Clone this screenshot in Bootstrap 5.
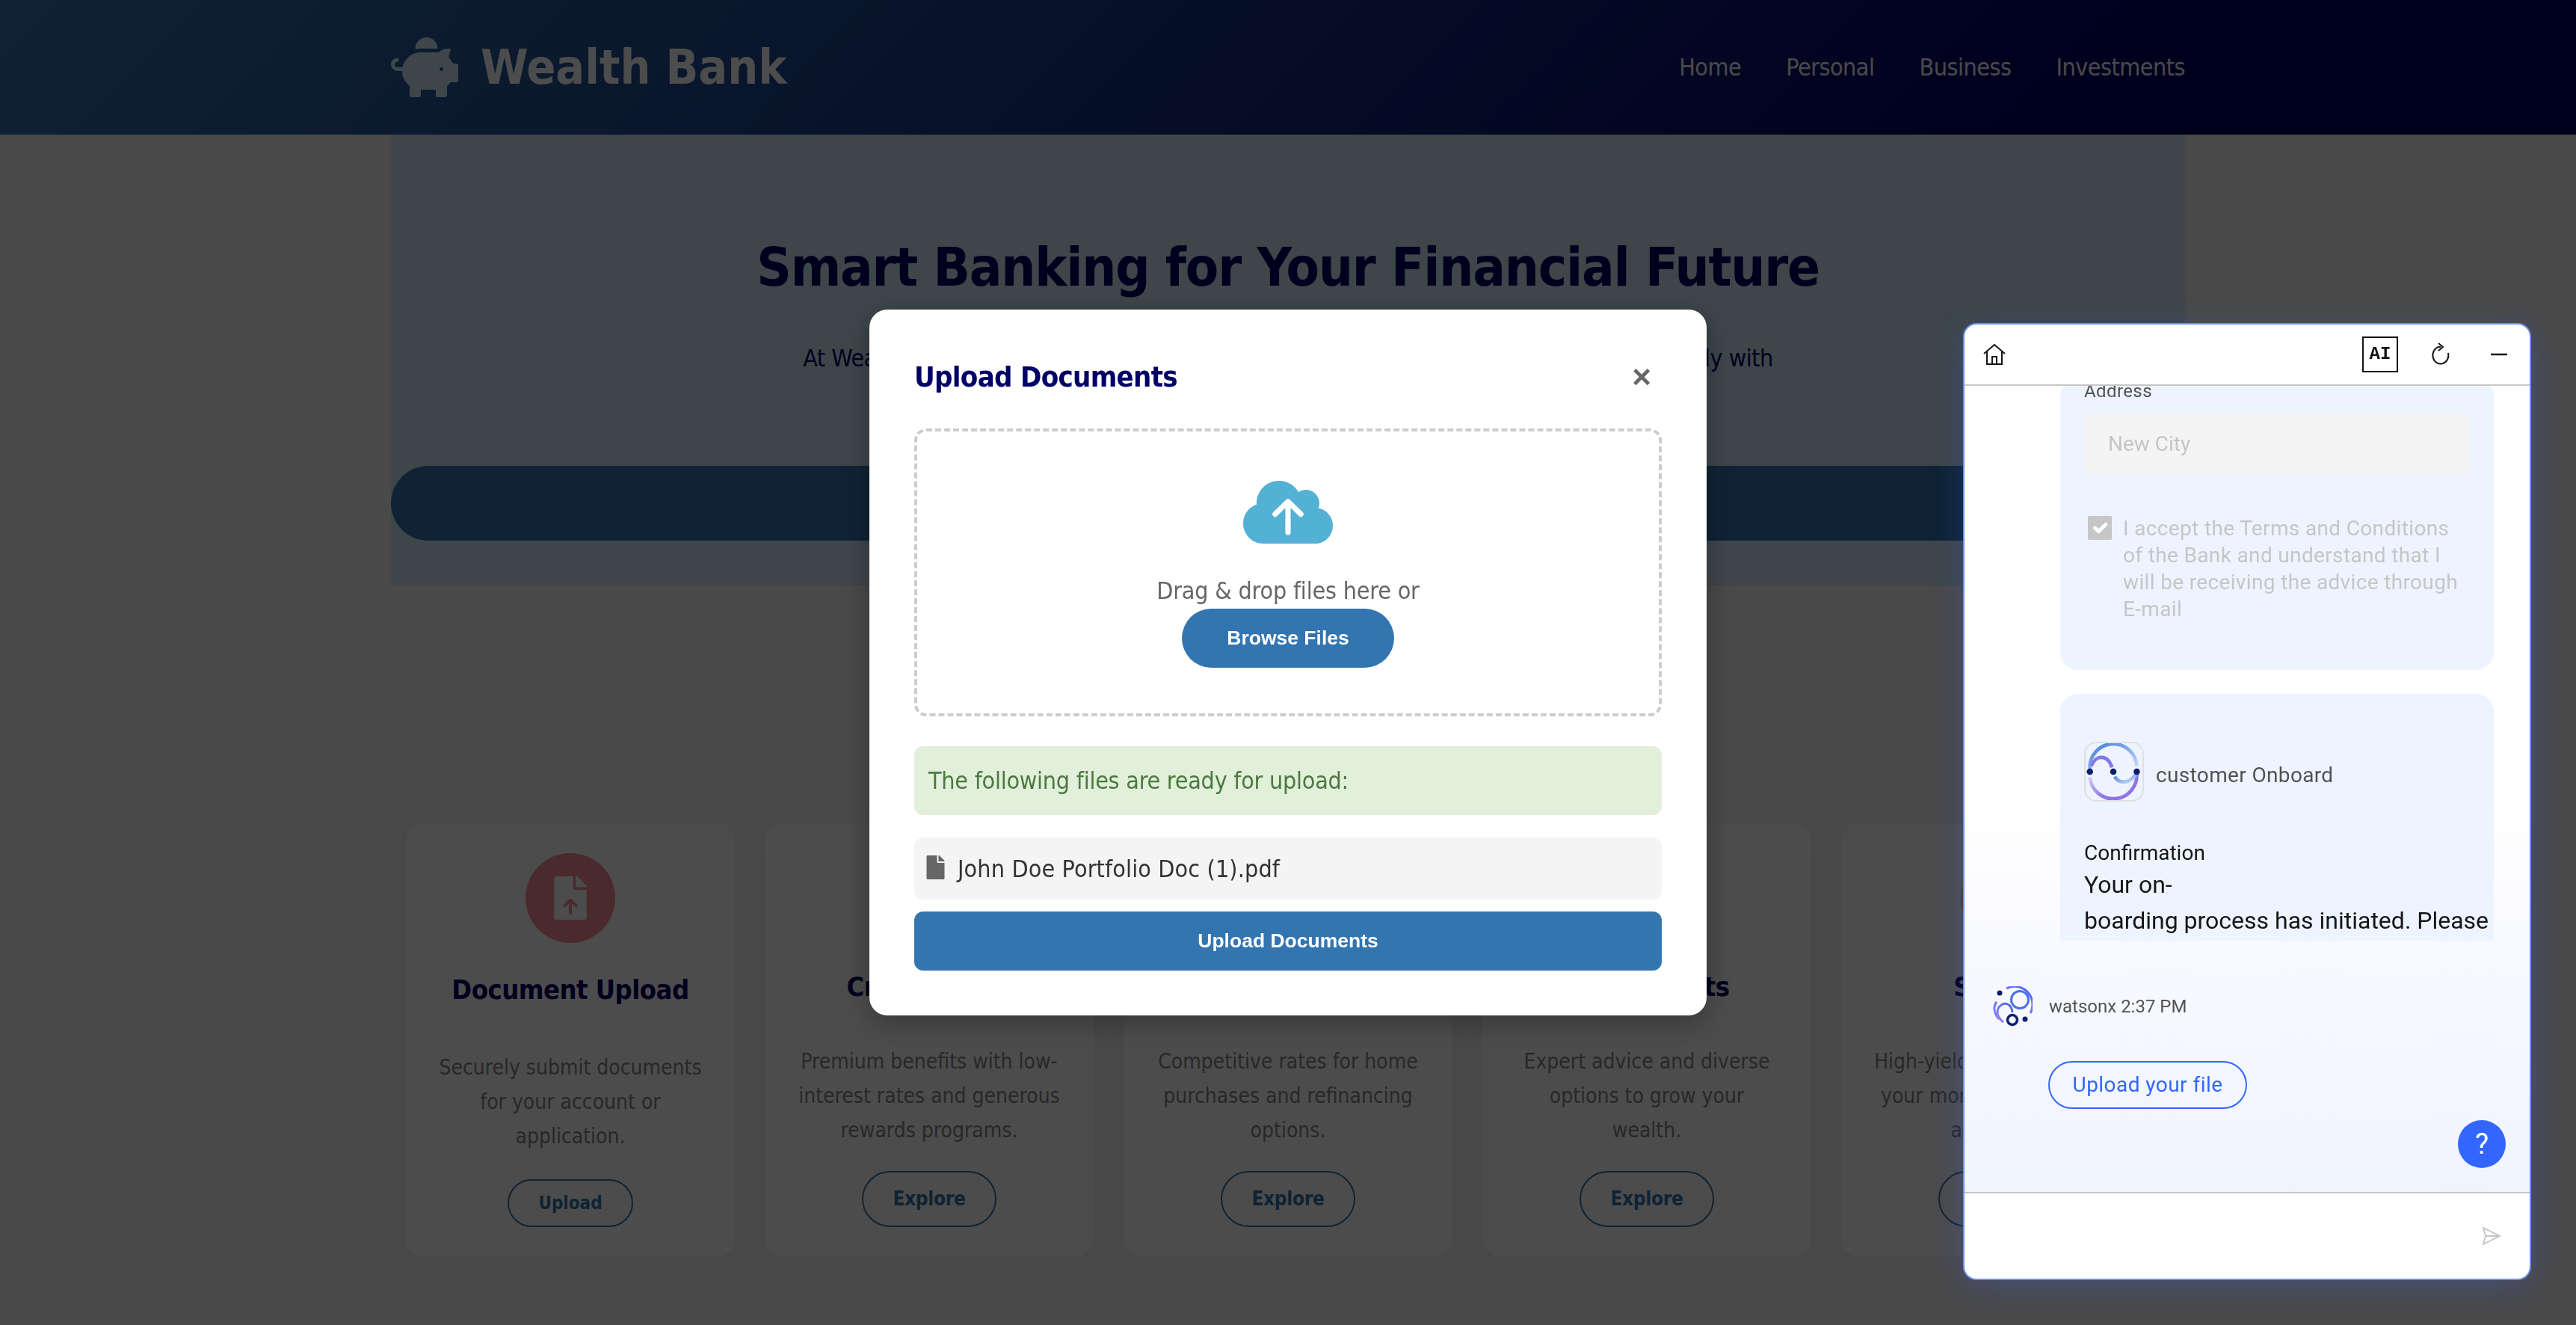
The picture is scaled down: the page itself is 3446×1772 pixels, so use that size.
<!DOCTYPE html>
<html lang="en">
<head>
  <meta charset="UTF-8">
  <meta name="viewport" content="width=device-width, initial-scale=1.0">
  <title>Wealth Bank</title>
  <link href="https://cdn.jsdelivr.net/npm/bootstrap@5.3.0/dist/css/bootstrap.min.css" rel="stylesheet">
  <style>
    body { background: #f5f5f5; font-family: "DejaVu Sans Condensed", "DejaVu Sans", sans-serif; font-size: 32px; color: #000066; }
    .top-bar { height: 180px; background: linear-gradient(135deg, #3375b0, #000066 80%); }
    .wrap-2400 { width: 2400px; margin: 0 auto; }
    .brand-row { gap: 30px; }
    .brand-name { font-size: 64px; font-weight: 700; color: #fff; line-height: 1; }
    .brand-icon { width: 90px; height: 80px; fill: #cfe9f3; }
    .top-nav { gap: 60px; }
    .top-link { color: #f5f5f5; font-size: 32px; letter-spacing: -.5px; text-decoration: none; }
    .hero-box { height: 603px; background: #cfe9f3; }
    .hero-title { font-size: 72px; letter-spacing: -1.15px; font-weight: 700; color: #000066; line-height: 80px; padding-top: 137px; margin: 0; }
    .hero-text { font-size: 32px; letter-spacing: -.5px; line-height: 48px; margin: 58px 0 0; height: 96px; color: #000066; }
    .hero-bar { height: 100px; background: #3375b0; margin-top: 72px; }
    .svc-row { padding: 318px 20px 0; gap: 40px; }
    .svc-card { flex: 1 1 0; min-width: 0; height: 580px; background: #fff; border-radius: 24px; padding: 40px 36px; box-shadow: 0 8px 32px rgba(0,0,0,.05); }
    .svc-icon { width: 120px; height: 120px; background: #f78c93; flex: none; }
    .svc-icon svg { width: 44px; height: 58px; }
    .svc-icon-warm { background: #ffc3aa; }
    .svc-title { font-size: 36px; letter-spacing: -.5px; line-height: 44px; font-weight: 700; margin: 37px 0 0; color: #000066; white-space: nowrap; }
    .svc-text { font-size: 28px; line-height: 46px; margin: 55px 0 0; color: #858585; }
    .svc-btn { width: 180px; height: 75px; margin-top: auto; border: 2px solid #3375b0; color: #3375b0; font-size: 26px; letter-spacing: -.3px; font-weight: 700; display: flex; align-items: center; justify-content: center; padding: 0; background: transparent; }
    .svc-first .svc-title { margin-top: 41px; }
    .svc-first .svc-text { margin-top: 59px; }
    .svc-first .svc-btn { width: 168px; height: 64px; font-size: 24px; letter-spacing: 0; }
    .modal-backdrop { --bs-backdrop-opacity: .7; }
    .modal { --bs-modal-width: 1120px; --bs-modal-border-radius: 24px; --bs-modal-border-width: 0; }
    .up-panel { padding: 60px; box-shadow: 0 10px 40px rgba(0,0,0,.3); }
    .up-title { font-size: 38px; letter-spacing: -.7px; line-height: 59px; padding-top: 1px; height: 59px; margin: 0; color: #000066; font-weight: 700; }
    .up-close { font-family: "Liberation Sans", sans-serif; font-weight: 700; font-size: 44px; line-height: 1; color: #666; border: 0; background: none; padding: 0; margin-right: 14px; }
    .drop-zone { height: 385px; margin-top: 40px; border: 4px dashed #ccc; border-radius: 16px; padding-top: 66px; }
    .drop-text { font-size: 32px; letter-spacing: -.2px; line-height: 48px; color: #666; margin: 39px 0 0; }
    .cloud-icon { width: 120px; height: 84px; display: block; }
    .browse-btn { width: 284px; height: 79px; background: #3375b0; color: #fff; border: 0; font-family: "Liberation Sans", sans-serif; font-weight: 700; font-size: 26.500px; padding: 0; }
    .ready-box { height: 92px; margin-top: 40px; background: #e2efda; color: #4a7a3f; border-radius: 12px; padding: 0 19px; font-size: 32px; letter-spacing: -.25px; }
    .file-row { height: 83px; margin-top: 30px; background: #f4f4f4; border-radius: 12px; padding: 0 16px; gap: 17px; color: #333; font-size: 32px; letter-spacing: .13px; }
    .file-row svg { width: 25px; height: 32px; fill: #666; margin-top: -4px; }
    .send-docs { height: 79px; margin-top: 16px; background: #3375b0; color: #fff; border: 0; border-radius: 12px; font-family: "Liberation Sans", sans-serif; font-weight: 700; font-size: 26.500px; }
    .chat-box { position: fixed; right: 60px; bottom: 60px; width: 760px; height: 1280px; z-index: 1060; background: #fff; border: 2px solid #6d91e0; border-radius: 18px; overflow: hidden; box-shadow: 0 8px 40px rgba(60,100,255,.25); font-family: Roboto, sans-serif; color: #161616; }
    .chat-head { height: 82px; flex: none; border-bottom: 2px solid #c6c6c6; padding: 0 29px 0 24px; }
    .ai-tag { width: 48px; height: 48px; border: 2px solid #161616; font-family: "Liberation Mono", monospace; font-weight: 700; font-size: 24px; line-height: 44px; text-align: center; }
    .head-renew { margin-left: 42px; }
    .head-min { margin-left: 53px; }
    .chat-body { position: relative; flex: 1 1 0; min-height: 0; background: linear-gradient(#fff 52%, #f9faff 68%, #f0f4ff); }
    .msg-scroll { height: 742px; overflow: hidden; padding-left: 128px; }
    .msg-bubble { width: 580px; background: #edf4ff; border-radius: 24px; padding: 0 32px; }
    .msg-one { margin-top: -10px; height: 390px; }
    .msg-two { margin-top: 32px; padding-top: 64px; padding-right: 0; height: 500px; }
    .addr-label { font-size: 24px; letter-spacing: .4px; line-height: 34px; color: #525252; margin: 0; padding: 0; }
    .addr-input { height: 79px; margin-top: 14px; border: 0; border-radius: 0; padding: 0 32px; font-size: 28px; font-family: inherit; }
    .addr-input:disabled { background: #f4f4f4; color: #c6c6c6; }
    .terms-row { margin-top: 56px; padding-left: 5px; gap: 15px; }
    .terms-row .form-check-input { width: 32px; height: 32px; margin: 1px 0 0; flex: none; border: 0; border-radius: 2px; background-color: #c6c6c6; opacity: 1; }
    .terms-label { font-size: 28px; letter-spacing: .35px; line-height: 36px; color: #c6c6c6; }
    .bot-logo { width: 80px; height: 80px; border: 2px solid #e0e0e0; border-radius: 16px; flex: none; }
    .bot-name { font-size: 28px; letter-spacing: .35px; color: #525252; margin-left: 16px; margin-top: 10px; }
    .conf-head { font-size: 28px; line-height: 36px; margin: 51px 0 0; }
    .conf-text { font-size: 32px; line-height: 48px; margin: 0; white-space: nowrap; }
    .meta-row { padding: 61px 0 0 37px; gap: 22px; }
    .meta-row svg { width: 54px; height: 54px; flex: none; }
    .meta-text { font-size: 24px; color: #525252; }
    .file-pill { width: 266px; height: 64px; margin: 46px 0 0 112px; border: 2px solid #3366ff; color: #3366ff; background: transparent; font-size: 28px; letter-spacing: .45px; padding: 0; }
    .help-dot { position: absolute; right: 32px; bottom: 32px; width: 64px; height: 64px; background: #3366ff; color: #fff; font-size: 38px; font-weight: 400; }
    .chat-foot { height: 116px; flex: none; border-top: 2px solid #c6c6c6; padding: 0 38px 0 0; }
    .chat-foot input { box-shadow: none; }
    .send-icon { flex: none; }
  </style>
</head>
<body class="overflow-hidden">

<header class="top-bar">
  <div class="wrap-2400 h-100 d-flex align-items-center justify-content-between">
    <div class="brand-row d-flex align-items-center">
      <svg class="brand-icon" viewBox="0 0 576 512"><path d="M560 224h-29.5c-8.8-20-21.6-37.7-37.4-52.5L512 96h-32c-29.4 0-55.4 13.5-73 34.3-7.6-1.1-15.1-2.3-23-2.3H256c-77.4 0-141.9 55-156.8 128H56c-14.8 0-26.5-13.5-23.5-28.8C34.7 215.8 45.4 208 57 208h1c3.3 0 6-2.7 6-6v-20c0-3.3-2.7-6-6-6-28.5 0-53.9 20.4-57.5 48.6C-3.9 258.8 22.7 288 56 288h40c0 52.2 25.4 98.1 64 127.3V496c0 8.8 7.2 16 16 16h64c8.8 0 16-7.2 16-16v-48h128v48c0 8.8 7.2 16 16 16h64c8.8 0 16-7.2 16-16v-80.7c11.8-8.9 22.3-19.4 31.3-31.3H560c8.8 0 16-7.2 16-16V240c0-8.8-7.2-16-16-16zm-128 64c-8.8 0-16-7.2-16-16s7.2-16 16-16 16 7.2 16 16-7.2 16-16 16zM256 96h128c5.4 0 10.7.4 15.9.8 0-.3.1-.5.1-.8 0-53-43-96-96-96s-96 43-96 96c0 2.1.5 4.1.6 6.2 15.2-3.9 31-6.2 47.4-6.2z"/></svg>
      <span class="brand-name">Wealth Bank</span>
    </div>
    <nav class="top-nav d-flex">
      <a class="top-link" href="#">Home</a>
      <a class="top-link" href="#">Personal</a>
      <a class="top-link" href="#">Business</a>
      <a class="top-link" href="#">Investments</a>
    </nav>
  </div>
</header>

<main class="wrap-2400">
  <section class="hero-box text-center">
    <h1 class="hero-title">Smart Banking for Your Financial Future</h1>
    <p class="hero-text">At Wealth Bank, we combine trusted expertise and modern tools to help you plan wisely with<br>confidence.</p>
    <div class="hero-bar rounded-pill"></div>
  </section>

  <section class="svc-row d-flex">
    <div class="svc-card svc-first d-flex flex-column align-items-center text-center">
      <div class="svc-icon rounded-circle d-flex align-items-center justify-content-center">
        <svg viewBox="0 0 384 512"><path fill="#fff" d="M224 136V0H24C10.7 0 0 10.7 0 24v464c0 13.3 10.7 24 24 24h336c13.3 0 24-10.7 24-24V160H248c-13.2 0-24-10.8-24-24zM377 105L279.1 7c-4.5-4.5-10.6-7-17-7H256v128h128v-6.1c0-6.3-2.5-12.4-7-16.9z"/><path fill="none" stroke="#f78c93" stroke-width="34" stroke-linecap="round" stroke-linejoin="round" d="M192 430V280M125 345l67-65 67 65"/></svg>
      </div>
      <h3 class="svc-title">Document Upload</h3>
      <p class="svc-text">Securely submit documents for your account or application.</p>
      <a class="svc-btn btn rounded-pill" href="#">Upload</a>
    </div>
    <div class="svc-card d-flex flex-column align-items-center text-center">
      <div class="svc-icon rounded-circle"></div>
      <h3 class="svc-title">Credit Cards</h3>
      <p class="svc-text">Premium benefits with low-interest rates and generous rewards programs.</p>
      <a class="svc-btn btn rounded-pill" href="#">Explore</a>
    </div>
    <div class="svc-card d-flex flex-column align-items-center text-center">
      <div class="svc-icon rounded-circle"></div>
      <h3 class="svc-title">Home Loans</h3>
      <p class="svc-text">Competitive rates for home purchases and refinancing options.</p>
      <a class="svc-btn btn rounded-pill" href="#">Explore</a>
    </div>
    <div class="svc-card d-flex flex-column align-items-center text-center">
      <div class="svc-icon rounded-circle"></div>
      <h3 class="svc-title">Investments</h3>
      <p class="svc-text">Expert advice and diverse<br>options to grow your<br>wealth.</p>
      <a class="svc-btn btn rounded-pill" href="#">Explore</a>
    </div>
    <div class="svc-card d-flex flex-column align-items-center text-center">
      <div class="svc-icon svc-icon-warm rounded-circle"></div>
      <h3 class="svc-title">Savings</h3>
      <p class="svc-text">High-yield accounts to build<br>your money with top rates<br>and secure.</p>
      <a class="svc-btn btn rounded-pill" href="#">Explore</a>
    </div>
  </section>
</main>

<div class="modal-backdrop show"></div>

<div class="modal d-block" tabindex="-1">
  <div class="modal-dialog modal-dialog-centered">
    <div class="modal-content up-panel">
      <div class="d-flex align-items-center justify-content-between">
        <h2 class="up-title">Upload Documents</h2>
        <button type="button" class="up-close" aria-label="Close">×</button>
      </div>
      <div class="drop-zone d-flex flex-column align-items-center">
        <svg class="cloud-icon" viewBox="0 32 640 448"><path fill="#53b1d6" d="M537.6 226.6c4.1-10.7 6.4-22.4 6.4-34.6 0-53-43-96-96-96-19.7 0-38.1 6-53.3 16.2C367 64.2 315.3 32 256 32c-88.4 0-160 71.6-160 160 0 2.7.1 5.4.2 8.1C40.2 219.8 0 273.2 0 336c0 79.5 64.5 144 144 144h368c70.7 0 128-57.3 128-128 0-61.9-44-113.6-102.4-125.4z"/><path fill="none" stroke="#fff" stroke-width="38" stroke-linecap="round" stroke-linejoin="round" d="M320 400V180M228 270l92-90 92 90"/></svg>
        <p class="drop-text">Drag &amp; drop files here or</p>
        <button type="button" class="browse-btn btn rounded-pill">Browse Files</button>
      </div>
      <div class="ready-box d-flex align-items-center">The following files are ready for upload:</div>
      <div class="file-row d-flex align-items-center">
        <svg viewBox="0 0 384 512"><path d="M224 136V0H24C10.7 0 0 10.7 0 24v464c0 13.3 10.7 24 24 24h336c13.3 0 24-10.7 24-24V160H248c-13.2 0-24-10.8-24-24zm160-14.1v6.1H256V0h6.1c6.4 0 12.5 2.5 17 7l97.9 98c4.5 4.5 7 10.6 7 16.9z"/></svg>
        <span>John Doe Portfolio Doc (1).pdf</span>
      </div>
      <button type="button" class="send-docs btn w-100">Upload Documents</button>
    </div>
  </div>
</div>

<aside class="chat-box d-flex flex-column">
  <div class="chat-head d-flex align-items-center">
    <svg width="32" height="32" viewBox="0 0 32 32" fill="none" stroke="#161616" stroke-width="2"><path d="M2 15 16 3l14 12M6 12v17h20V12M13 29V19h6v10"/></svg>
    <div class="ai-tag ms-auto">AI</div>
    <svg class="head-renew" width="28" height="32" viewBox="0 0 28 32" fill="none" stroke="#161616" stroke-width="2"><path d="M15 6H12A10.500 11.500 0 1 0 25 14"/><path d="M12 1l6 5-6 5"/></svg>
    <svg class="head-min" width="24" height="4" viewBox="0 0 24 4"><path d="M1 2h22" stroke="#161616" stroke-width="2.500"/></svg>
  </div>
  <div class="chat-body">
    <div class="msg-scroll">
      <div class="msg-bubble msg-one">
        <label class="addr-label d-block">Address</label>
        <input class="addr-input form-control" value="New City" disabled>
        <div class="terms-row d-flex">
          <input class="form-check-input" type="checkbox" checked disabled>
          <span class="terms-label">I accept the Terms and Conditions<br>of the Bank and understand that I<br>will be receiving the advice through<br>E-mail</span>
        </div>
      </div>
      <div class="msg-bubble msg-two">
        <div class="d-flex align-items-center">
          <svg class="bot-logo" viewBox="0 0 80 80" fill="none">
            <defs>
              <linearGradient id="arcTop" x1="0" y1="0" x2="1" y2="1"><stop offset="0" stop-color="#3f7bd6"/><stop offset="1" stop-color="#cfdcf7"/></linearGradient>
              <linearGradient id="arcLow" x1="0" y1="0" x2="1" y2="1"><stop offset="0" stop-color="#dcd6fa"/><stop offset=".6" stop-color="#8f74e8"/></linearGradient>
            </defs>
            <path d="M6 36A33 33 0 0 1 72 32" stroke="url(#arcTop)" stroke-width="5"/>
            <path d="M6 48A33 33 0 0 0 72 42" stroke="url(#arcLow)" stroke-width="5"/>
            <path d="M8 32C14 16 31 15 37 34" stroke="#8478e6" stroke-width="5"/>
            <path d="M41 47C47 58 63 57 71 43" stroke="url(#arcTop)" stroke-width="5"/>
            <circle cx="6" cy="40" r="4.500" fill="#0a1f6b"/><circle cx="39" cy="40" r="4.500" fill="#0a1f6b"/><circle cx="72" cy="40" r="4.500" fill="#0a1f6b"/>
          </svg>
          <span class="bot-name">customer Onboard</span>
        </div>
        <p class="conf-head">Confirmation</p>
        <p class="conf-text">Your on-</p>
        <p class="conf-text">boarding process has initiated. Please</p>
      </div>
    </div>
    <div class="meta-row d-flex align-items-center">
      <svg viewBox="0 0 54 54" fill="none">
        <defs><linearGradient id="wxArc" x1="0" y1="1" x2="1" y2="0"><stop offset="0" stop-color="#a28cf5"/><stop offset="1" stop-color="#3f5ff0"/></linearGradient></defs>
        <circle cx="37" cy="18" r="11.500" stroke="#4f6ff0" stroke-width="3"/>
        <path d="M19 3A24 24 0 0 1 51 36" stroke="url(#wxArc)" stroke-width="3"/>
        <path d="M9 44C2 36 1 27 6 21M27 35C26 24 17 19 9 28 5 34 7 42 15 48" stroke="url(#wxArc)" stroke-width="3"/>
        <circle cx="27" cy="45" r="6.500" stroke="#0f1f6b" stroke-width="3.500"/>
        <circle cx="10" cy="9" r="3.500" fill="#0f1f6b"/><circle cx="44" cy="44" r="3.500" fill="#0f1f6b"/>
      </svg>
      <span class="meta-text">watsonx 2:37 PM</span>
    </div>
    <button type="button" class="file-pill btn rounded-pill d-block">Upload your file</button>
    <div class="help-dot rounded-circle d-flex align-items-center justify-content-center">?</div>
  </div>
  <div class="chat-foot d-flex align-items-center">
    <input class="form-control border-0 bg-transparent" type="text" aria-label="Message">
    <svg class="send-icon" width="26" height="26" viewBox="0 0 26 26" fill="none" stroke="#c6c6c6" stroke-width="2"><path d="M2 2l22 11L2 24l3-11zM5 13h19"/></svg>
  </div>
</aside>

<script src="https://cdn.jsdelivr.net/npm/bootstrap@5.3.0/dist/js/bootstrap.bundle.min.js"></script>
</body>
</html>
